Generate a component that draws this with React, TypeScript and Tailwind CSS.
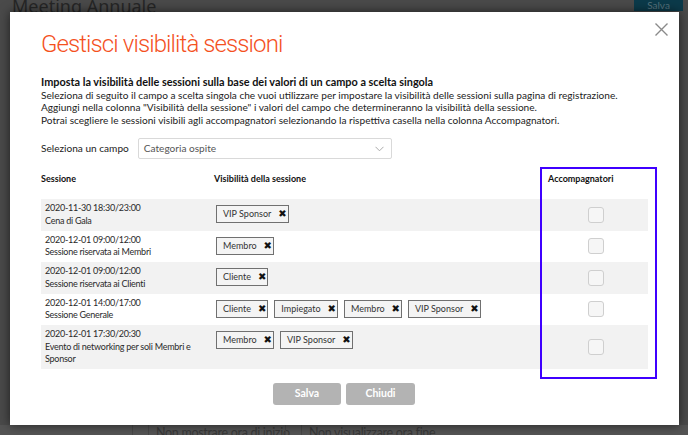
import React from "react";

const body = { fontFamily: 'Lato, "Noto Sans", Arial, sans-serif' };
const title = { fontFamily: 'Roboto, "Noto Sans", sans-serif' };

type Session = { date: string; name: string; tags: string[] };

const sessions: Session[] = [
  { date: "2020-11-30 18:30/23:00", name: "Cena di Gala", tags: ["VIP Sponsor"] },
  { date: "2020-12-01 09:00/12:00", name: "Sessione riservata ai Membri", tags: ["Membro"] },
  { date: "2020-12-01 09:00/12:00", name: "Sessione riservata ai Clienti", tags: ["Cliente"] },
  { date: "2020-12-01 14:00/17:00", name: "Sessione Generale", tags: ["Cliente", "Impiegato", "Membro", "VIP Sponsor"] },
  { date: "2020-12-01 17:30/20:30", name: "Evento di networking per soli Membri e Sponsor", tags: ["Membro", "VIP Sponsor"] },
];

function Tag({ label }: { label: string }) {
  return (
    <div className="flex h-[18px] items-center gap-[7px] border border-[#707070] bg-[#f4f4f4] pl-[6px] pr-[1px] text-[9px] text-[#333]">
      <span>{label}</span>
      <span className="text-[10px] leading-none text-[#111]" style={{ fontFamily: '"DejaVu Sans", sans-serif' }}>
        ✖
      </span>
    </div>
  );
}

export default function App() {
  return (
    <div className="relative h-[435px] w-[688px] overflow-hidden bg-[#4a4a4a]" style={body}>
      {/* background page */}
      <div className="flex h-[12px] items-start justify-between">
        <div className="-mt-[7px] ml-[12px] text-[18px] text-[#262626]" style={{ fontFamily: '"Noto Sans", sans-serif' }}>
          Meeting Annuale
        </div>
        <div className="mr-[5px] flex h-[11px] w-[49px] items-start justify-center bg-[#0b3a4a] text-[10px] leading-[10px] text-[#56737d]">
          Salva
        </div>
      </div>
      <div className="absolute bottom-0 left-0 flex h-[10px] w-full items-start whitespace-nowrap bg-[#545454] text-[12.5px] leading-[14px] tracking-[-0.3px] text-[#383838]">
        <div className="ml-[132px] h-full w-px bg-[#474747]" />
        <div className="ml-[15px] h-full w-px bg-[#474747]" />
        <div className="ml-[7px] mt-[1px] w-[129px]">Non mostrare ora di inizio</div>
        <div className="h-full w-px bg-[#474747]" />
        <div className="ml-[15px] h-full w-px bg-[#474747]" />
        <div className="ml-[7px] mt-[1px]">Non visualizzare ora fine</div>
      </div>

      {/* modal */}
      <div className="absolute left-[10px] top-[12px] h-[413px] w-[669px] bg-white shadow-[0_0_10px_rgba(0,0,0,0.6)]">
        <svg className="absolute left-[645px] top-[11px]" width="13" height="13" viewBox="0 0 13 13">
          <path d="M0.5 0.5 L12.5 12.5 M12.5 0.5 L0.5 12.5" stroke="#8a8a8a" strokeWidth="1.4" />
        </svg>

        <div className="pl-[31px] pr-[21px]">
          <h1 className="pt-[18px] text-[24px] font-light leading-[28px] tracking-[-0.9px] text-[#f4511e]" style={title}>
            Gestisci visibilità sessioni
          </h1>

          <div className="mt-[18px] whitespace-nowrap text-[10.1px] leading-[12.5px] text-[#222]">
            <div className="text-[10.9px] font-bold text-[#111]">
              Imposta la visibilità delle sessioni sulla base dei valori di un campo a scelta singola
            </div>
            <div>
              Seleziona di seguito il campo a scelta singola che vuoi utilizzare per impostare la visibilità delle sessioni sulla pagina di registrazione.
            </div>
            <div>Aggiungi nella colonna "Visibilità della sessione" i valori del campo che determineranno la visibilità della sessione.</div>
            <div>Potrai scegliere le sessioni visibili agli accompagnatori selezionando la rispettiva casella nella colonna Accompagnatori.</div>
          </div>

          <div className="mt-[12px] flex items-center gap-[9px] text-[10.1px] text-[#222]">
            <span>Seleziona un campo</span>
            <div className="flex h-[21px] w-[254px] items-center justify-between rounded-[2px] border border-[#d9d9d9] pl-[5px] pr-[7px] text-[#555]">
              <span>Categoria ospite</span>
              <svg width="9" height="6" viewBox="0 0 9 6">
                <path d="M0.5 0.8 L4.5 4.8 L8.5 0.8" stroke="#aaa" strokeWidth="1" fill="none" />
              </svg>
            </div>
          </div>

          <div className="mt-[10px] w-[607px] text-[9px] tracking-[-0.25px] text-[#2a2a2a]">
            <div className="grid h-[30px] grid-cols-[173px_330px_104px] items-start pt-[3px] text-[9px] font-bold tracking-normal text-[#111]">
              <div>Sessione</div>
              <div>Visibilità della sessione</div>
              <div className="pl-[4px]">Accompagnatori</div>
            </div>
            {sessions.map((s, i) => (
              <div
                key={i}
                className={`grid grid-cols-[173px_330px_104px] py-[3.25px] ${i % 2 === 0 ? "bg-[#f2f2f2]" : "bg-white"}`}
              >
                <div className="pl-[4px] pr-[19px] leading-[12.5px]">
                  <div>{s.date}</div>
                  <div>{s.name}</div>
                </div>
                <div className="flex flex-wrap gap-[6px] pl-[2px] pt-[2.75px] tracking-normal">
                  {s.tags.map((t) => (
                    <Tag key={t} label={t} />
                  ))}
                </div>
                <div className="flex items-center justify-center">
                  <div className="h-[16px] w-[16px] rounded-[3px] border border-[#cfcfcf] bg-[#f6f6f6]" />
                </div>
              </div>
            ))}
          </div>
        </div>

        <div className="mt-[14px] flex justify-center gap-[5px] pr-[1px] text-[10.5px] font-bold text-white">
          <div className="flex h-[22px] w-[68px] items-center justify-center rounded-[3px] bg-[#b3b3b3]">Salva</div>
          <div className="flex h-[22px] w-[69px] items-center justify-center rounded-[3px] bg-[#b3b3b3]">Chiudi</div>
        </div>

        {/* annotation */}
        <div className="absolute left-[530px] top-[155px] h-[212px] w-[117px] border-2 border-[#3f00ff]" />
      </div>
    </div>
  );
}
